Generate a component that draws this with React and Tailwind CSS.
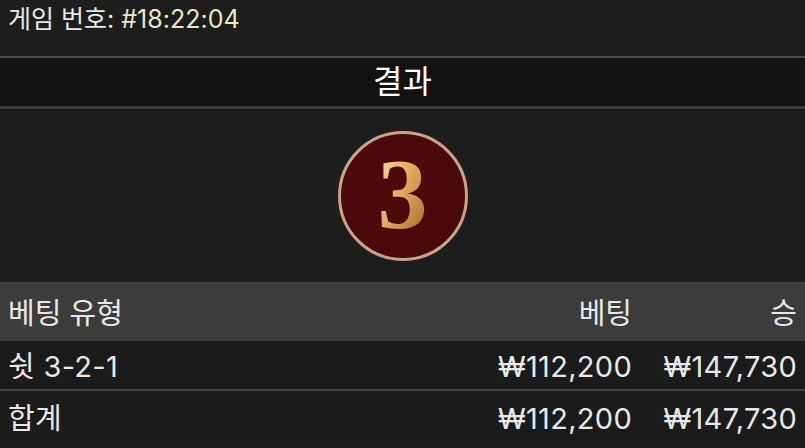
import React from 'react';

const rows = [
  { type: '쉿 3-2-1', bet: '₩112,200', win: '₩147,730' },
];

const App = () => {
  return (
    <div
      className="w-[805px] h-[448px] overflow-hidden bg-[#1d1d1d] text-[#e8e8e8]"
      style={{ fontFamily: 'Inter, "Noto Sans CJK KR", sans-serif' }}
    >
      <div className="h-[56px] px-2 pt-[3px] text-[25px] leading-[32px]">
        게임 번호: <span className="text-[#ebe5c2]">#18:22:04</span>
      </div>

      <div className="h-[2px] bg-[#4b4b4b]" />
      <div className="h-[48px] bg-[#121212] flex items-center justify-center text-[32px] text-white">
        결과
      </div>
      <div className="h-[3px] bg-[#3f3f3f]" />

      <div className="h-[173px] flex items-center justify-center">
        <div className="w-[130px] h-[130px] rounded-full border-[3px] border-[#c9a386] bg-[#4b0a0a] flex items-center justify-center">
          <span
            className="text-[100px] font-bold leading-none -mt-[4px] bg-gradient-to-br from-[#fbe2a4] via-[#dfa658] to-[#9a6428] bg-clip-text text-transparent"
            style={{ fontFamily: '"Liberation Serif", serif' }}
          >
            3
          </span>
        </div>
      </div>

      <div className="h-[59px] bg-[#3c3c3c] flex items-center px-2 pt-[4px] text-[29px]">
        <div className="flex-1">베팅 유형</div>
        <div className="w-[160px] text-right">베팅</div>
        <div className="w-[165px] text-right">승</div>
      </div>

      {rows.map((r) => (
        <div key={r.type} className="h-[50px] bg-[#1b1b1b] flex items-center px-2 pt-[4px] text-[29px] tracking-[0.3px] border-b-2 border-[#444]">
          <div className="flex-1">{r.type}</div>
          <div className="w-[160px] text-right">{r.bet}</div>
          <div className="w-[165px] text-right">{r.win}</div>
        </div>
      ))}

      <div className="h-[54px] bg-[#1b1b1b] flex items-center px-2 pt-[2px] text-[29px] tracking-[0.3px]">
        <div className="flex-1">합계</div>
        <div className="w-[160px] text-right">₩112,200</div>
        <div className="w-[165px] text-right">₩147,730</div>
      </div>
    </div>
  );
};

export default App;
